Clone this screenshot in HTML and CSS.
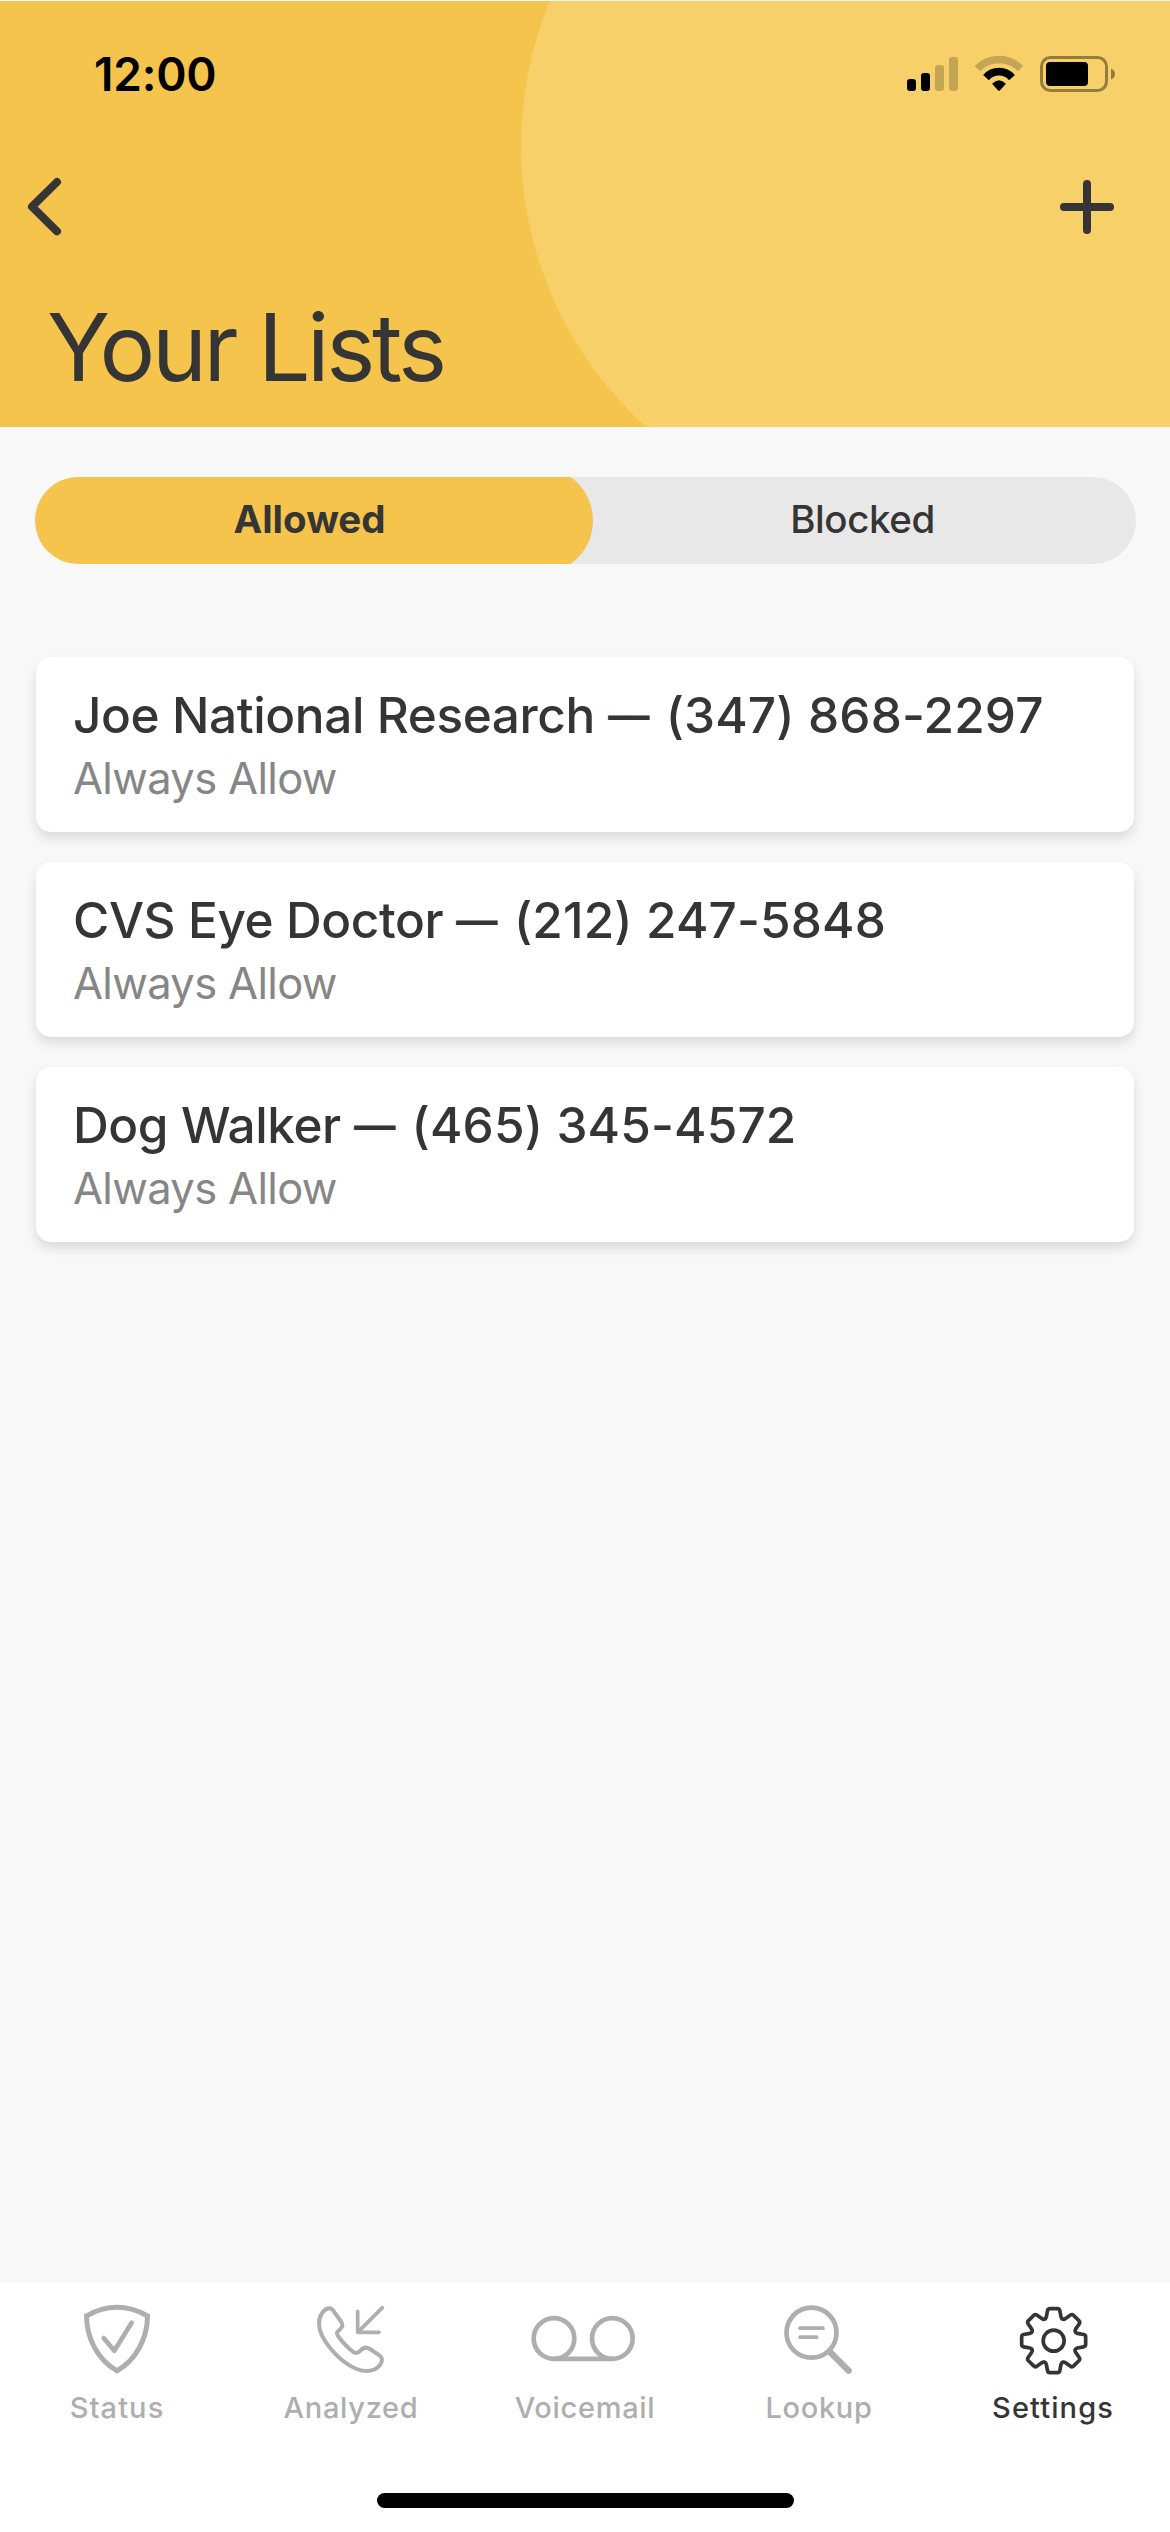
FILE: index.html
```html
<!DOCTYPE html>
<html lang="en">
<head>
<meta charset="utf-8">
<title>Your Lists</title>
<link rel="stylesheet" href="styles.css">
</head>
<body>
<header class="header">
  <svg class="header-circle" width="756" height="756" viewBox="0 0 756 756"><rect width="1000" height="756" rx="378"/></svg>
  <div class="status-bar">
    <span class="time">12:00</span>
    <svg class="status-icons" width="210" height="40" viewBox="906 54 210 40">
      <rect x="907" y="79" width="9" height="12" rx="3"/>
      <rect x="921" y="73" width="9" height="18" rx="3"/>
      <g opacity=".2">
        <rect x="935" y="65" width="9" height="26" rx="3"/>
        <rect x="949" y="57" width="9" height="34" rx="3"/>
        <path d="M977.5 68.6A30 30 0 0 1 1020.5 68.6" class="wifi-arc"/>
      </g>
      <path d="M986 77.6A17.3 17.3 0 0 1 1012 77.6" class="wifi-arc"/>
      <path d="M992 83.8Q999 76.8 1006 83.8L999.8 90.6Q999 91.3 998.2 90.6Z"/>
      <g opacity=".4">
        <rect x="1041.5" y="57.5" width="65" height="33" rx="9" class="battery-case"/>
        <path d="M1111 68.5Q1115 70 1115 74T1111 79.5Z"/>
      </g>
      <rect x="1046" y="62" width="42" height="24" rx="4"/>
    </svg>
  </div>
  <nav class="nav-bar">
    <svg width="36" height="60" viewBox="27 177 36 60"><path class="nav-stroke" d="M57 182L32 206.7L57 231.3"/></svg>
    <svg width="56" height="60" viewBox="1059 177 56 60"><path class="nav-stroke" d="M1087 184V230M1064 207H1110"/></svg>
  </nav>
  <h1 class="title">Your Lists</h1>
</header>
<main class="content">
  <div class="segments">
    <div class="segment segment-active"><span>Allowed</span></div>
    <div class="segment segment-idle"><span>Blocked</span></div>
  </div>
  <section class="list">
    <article class="card">
      <h2 class="card-title">Joe National Research <span class="dash">—</span> <span class="phone">(347) 868-2297</span></h2>
      <p class="card-note">Always Allow</p>
    </article>
    <article class="card">
      <h2 class="card-title">CVS Eye Doctor <span class="dash">—</span> <span class="phone">(212) 247-5848</span></h2>
      <p class="card-note">Always Allow</p>
    </article>
    <article class="card">
      <h2 class="card-title">Dog Walker <span class="dash">—</span> <span class="phone">(465) 345-4572</span></h2>
      <p class="card-note">Always Allow</p>
    </article>
  </section>
</main>
<footer class="footer">
  <nav class="tabs">
    <div class="tab">
      <svg class="tab-icon" viewBox="0 87 702 240">
        <path stroke-width="15" d="M259.5 137.5Q351 86 442.5 137.5C442.5 205 408 270 351 302.5C294 270 259.500 205 259.500 137.500Z"/>
        <path class="round" stroke-width="14" d="M311 204L343 242L395 158"/>
      </svg>
      <span>Status</span>
    </div>
    <div class="tab tab-tight">
      <svg class="tab-icon" viewBox="702 87 702 240">
        <path stroke-width="12" d="M957 160C957 135 973 115 988 115C996 115 999 120 1004 128L1022 153C1030 165 1029 170 1020 178C1010 186 1008 190 1014 198C1025 213 1045 235 1060 246C1070 252 1074 249 1080 243C1090 231 1099 230 1110 237L1135 254C1148 262 1149 272 1140 285C1128 300 1112 303 1100 303C1064 303 1022 272 992 236C968 208 957 180 957 160Z"/>
        <path class="round" stroke-width="11" d="M1073 124V187H1137M1147 113L1073 187"/>
      </svg>
      <span>Analyzed</span>
    </div>
    <div class="tab tab-tight">
      <svg class="tab-icon" viewBox="-36 87 702 240" stroke-width="14">
        <circle cx="222" cy="205.500" r="61"/>
        <circle cx="397" cy="205.500" r="61"/>
        <path d="M222 266.500H397"/>
      </svg>
      <span>Voicemail</span>
    </div>
    <div class="tab tab-tight">
      <svg class="tab-icon" viewBox="666 87 702 240">
        <circle cx="994.500" cy="188" r="75" stroke-width="14"/>
        <path class="round" stroke-width="11" d="M960 174.500H1029M960 201.500H1010"/>
        <path class="round" stroke-width="19" d="M1050 246L1106 302"/>
      </svg>
      <span>Lookup</span>
    </div>
    <div class="tab tab-current">
      <svg class="tab-icon" viewBox="-12 87 702 240" stroke-width="11">
        <defs><path id="tooth" class="round" d="M-27 -65Q-23 -66 -22 -71L-18.500 -90Q-17.500 -96 -11 -96H11Q17.500 -96 18.500 -90L22 -71Q23 -66 27 -65"/></defs>
        <g transform="translate(341 212)">
          <circle r="31.500"/>
          <use href="#tooth"/>
          <use href="#tooth" transform="rotate(45)"/>
          <use href="#tooth" transform="rotate(90)"/>
          <use href="#tooth" transform="rotate(135)"/>
          <use href="#tooth" transform="rotate(180)"/>
          <use href="#tooth" transform="rotate(225)"/>
          <use href="#tooth" transform="rotate(270)"/>
          <use href="#tooth" transform="rotate(315)"/>
        </g>
      </svg>
      <span>Settings</span>
    </div>
  </nav>
  <div class="home-indicator"></div>
</footer>
</body>
</html>
```
FILE: styles.css
```css
* {
  box-sizing: border-box;
}

body {
  margin: 0;
  width: 1170px;
  height: 2532px;
  display: flex;
  flex-direction: column;
  background: #f8f8f8;
  color: #353535;
  font-family: Inter, "Liberation Sans", sans-serif;
}

h1,
h2,
p {
  margin: 0;
}

svg {
  display: block;
}

.header {
  position: relative;
  overflow: hidden;
  height: 426px;
  margin-top: 1px;
  background: #f5c44d;
}

.header-circle {
  position: absolute;
  left: 521px;
  top: -233px;
  fill: #f7d069;
}

.status-bar {
  position: relative;
  display: flex;
  justify-content: space-between;
  align-items: flex-start;
  padding: 45px 54px 0 94px;
  height: 176px;
}

.time {
  color: #000;
  font-size: 46px;
  font-weight: 600;
  letter-spacing: -.200px;
  line-height: 56px;
}

.status-icons {
  margin-top: 8px;
}

.wifi-arc {
  fill: none;
  stroke: #000;
  stroke-width: 7.700px;
}

.battery-case {
  fill: none;
  stroke: #000;
  stroke-width: 3px;
}

.nav-bar {
  position: relative;
  display: flex;
  justify-content: space-between;
  padding: 0 55px 0 27px;
}

.nav-stroke {
  fill: none;
  stroke: #353535;
  stroke-width: 8px;
  stroke-linecap: round;
  stroke-linejoin: round;
}

.title {
  position: relative;
  margin: 54px 0 0 47px;
  font-size: 93px;
  font-weight: 400;
  letter-spacing: -3.400px;
  line-height: 112px;
  white-space: nowrap;
}

.content {
  flex: 1;
  padding: 50px 34px 0 35px;
}

.segments {
  display: flex;
  height: 87px;
  overflow: hidden;
  border-radius: 43.500px;
  background: #e8e8e8;
}

.segment {
  flex: 1;
  display: flex;
  align-items: center;
  justify-content: center;
  padding-bottom: 3px;
  font-size: 38.500px;
  font-weight: 500;
}

.segment-active {
  flex: 0 0 558px;
  margin: -10px 0;
  padding-right: 9px;
  border-radius: 53.500px;
  background: #f5c44d;
  font-weight: 700;
}

.segment-idle {
  padding-right: 4px;
  letter-spacing: -.400px;
}

.list {
  display: flex;
  flex-direction: column;
  gap: 30px;
  margin-top: 93px;
  padding: 0 2px 0 1px;
}

.card {
  height: 175px;
  padding: 28px 36px 0 37px;
  border-radius: 15px;
  background: #fff;
  box-shadow: 0 6px 12px rgba(0, 0, 0, .12);
  white-space: nowrap;
}

.card-title {
  font-size: 49.500px;
  font-weight: 500;
  letter-spacing: -.400px;
  line-height: 60px;
}

.dash {
  display: inline-block;
  margin: 0 0 0 -4px;
  transform: scaleX(.84);
}

.phone {
  letter-spacing: .150px;
}

.card-note {
  margin-top: 7px;
  color: #868686;
  font-size: 43.500px;
  letter-spacing: -.650px;
  line-height: 53px;
}

.footer {
  display: flex;
  flex-direction: column;
  align-items: center;
  height: 249px;
  padding-top: 16px;
  background: #fff;
}

.tabs {
  display: flex;
  width: 1170px;
  height: 194px;
}

.tab {
  width: 234px;
  display: flex;
  flex-direction: column;
  align-items: center;
  color: #aeaeae;
  font-size: 29px;
  font-weight: 500;
  letter-spacing: 1.100px;
  line-height: 36px;
}

.tab-tight {
  letter-spacing: .700px;
}

.tab span {
  margin-top: 11px;
}

.tab-current {
  color: #353535;
}

.tab-icon {
  width: 234px;
  height: 80px;
  fill: none;
  stroke: currentColor;
}

.round {
  stroke-linecap: round;
  stroke-linejoin: round;
}

.home-indicator {
  width: 417px;
  height: 15px;
  border-radius: 8px;
  background: #000;
}
```
